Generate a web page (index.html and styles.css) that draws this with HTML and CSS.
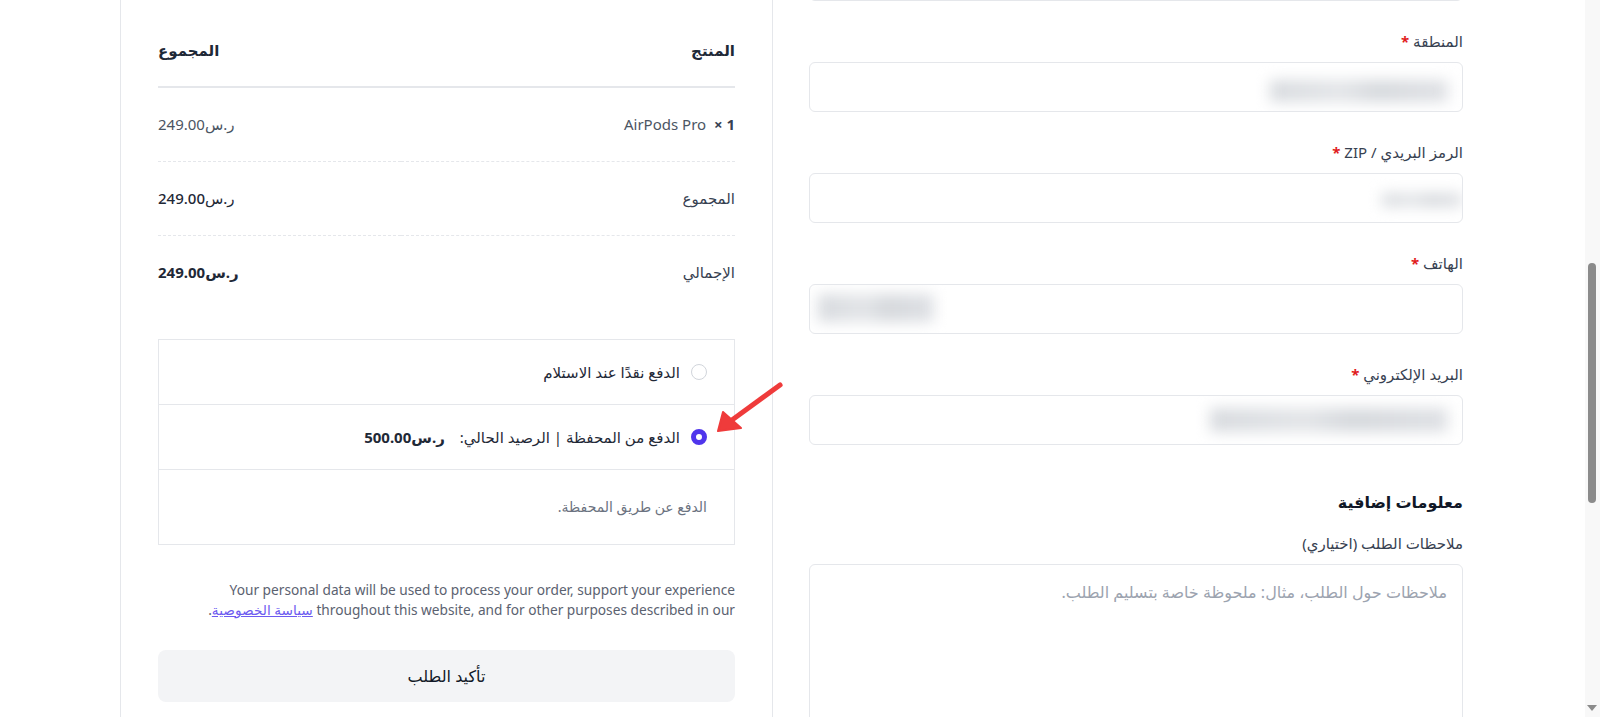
FILE: index.html
```html
<!DOCTYPE html>
<html lang="ar" dir="rtl">
<head>
  <meta charset="UTF-8" />
  <meta name="viewport" content="width=device-width, initial-scale=1.0"/>
  <title>إتمام الطلب</title>
  <link rel="stylesheet" href="styles.css">
</head>
<body>
  <main class="checkout">
    <section class="billing">
      <!-- bottom of the city field, scrolled out of view -->
      <div class="field field-prev">
        <div class="input"></div>
      </div>
      <div class="field">
        <label>المنطقة <span class="req">*</span></label>
        <div class="input"><span class="blur blur-region"></span></div>
      </div>
      <div class="field">
        <label>الرمز البريدي / ZIP <span class="req">*</span></label>
        <div class="input"><span class="blur blur-zip"></span></div>
      </div>
      <div class="field">
        <label>الهاتف <span class="req">*</span></label>
        <div class="input input-ltr"><span class="blur blur-phone"></span></div>
      </div>
      <div class="field">
        <label>البريد الإلكتروني <span class="req">*</span></label>
        <div class="input"><span class="blur blur-email"></span></div>
      </div>

      <h3 class="extra-title">معلومات إضافية</h3>
      <div class="field">
        <label>ملاحظات الطلب (اختياري)</label>
        <textarea placeholder="ملاحظات حول الطلب، مثال: ملحوظة خاصة بتسليم الطلب."></textarea>
      </div>
    </section>

    <section class="review">
      <table class="order-table">
        <thead>
          <tr>
            <th>المنتج</th>
            <th class="col-total">المجموع</th>
          </tr>
        </thead>
        <tbody>
          <tr>
            <td class="product-name">AirPods Pro&nbsp; <strong>×&nbsp;1</strong></td>
            <td class="col-total">ر.س249.00</td>
          </tr>
          <tr class="subtotal">
            <td>المجموع</td>
            <td class="col-total">ر.س249.00</td>
          </tr>
          <tr class="grand-total">
            <td>الإجمالي</td>
            <td class="col-total">ر.س249.00</td>
          </tr>
        </tbody>
      </table>

      <div class="payment">
        <label class="option">
          <span class="radio"></span>
          الدفع نقدًا عند الاستلام
        </label>
        <label class="option">
          <span class="radio checked"></span>
          الدفع من المحفظة | الرصيد الحالي:&nbsp; <strong>ر.س500.00</strong>
        </label>
        <div class="payment-desc">الدفع عن طريق المحفظة.</div>
      </div>

      <p class="privacy">Your personal data will be used to process your order, support your experience throughout this website, and for other purposes described in our <a href="#">سياسة الخصوصية</a>.</p>

      <button class="place-order">تأكيد الطلب</button>
    </section>
  </main>

  <!-- page is scrolled: draw the scrollbar by hand -->
  <div class="scrollbar">
    <span class="thumb"></span>
    <span class="down"></span>
  </div>

  <svg class="pointer" width="90" height="66" viewBox="0 0 90 66">
    <line x1="80" y1="10" x2="32" y2="45" stroke="#ef3b3b" stroke-width="5" stroke-linecap="round"/>
    <polygon points="18,56 23,37 41,53" fill="#ef3b3b" stroke="#ef3b3b" stroke-width="2" stroke-linejoin="round"/>
  </svg>
</body>
</html>
```

FILE: styles.css
```css
html, body {
  overflow: hidden;
}

body {
  margin: 0;
  background: #fff;
  font-family: "Noto Sans", "DejaVu Sans", sans-serif;
  font-size: 15px;
  color: #374151;
  height: 717px;
}

.checkout {
  display: grid;
  grid-template-columns: 727px 653px;
  margin: -100px 100px 0 0;
}

/* billing form */

.billing {
  padding: 20px 37px 0 36px;
}

.field {
  margin-bottom: 30px;
}

.field-prev {
  padding-top: 31px;
}

.field label {
  display: block;
  line-height: 20px;
  margin-bottom: 11px;
  color: #374151;
}

.req {
  color: #e11d1d;
  font-weight: 700;
}

.input {
  height: 48px;
  border: 1px solid #e5e7eb;
  border-radius: 6px;
  display: flex;
  align-items: center;
  padding: 0 14px;
  overflow: hidden;
}

.input-ltr {
  justify-content: flex-end;
  padding: 0 8px;
}

.blur {
  display: block;
  background: linear-gradient(to left, #dfe1e5, #d6d9dd 40%, #e3e5e8 60%, #d8dbdf);
  filter: blur(7px);
}

.blur-region { width: 178px; height: 22px; margin-top: 7px; }
.blur-zip { width: 80px; height: 14px; margin: 4px -14px 0 0; }
.blur-phone { width: 116px; height: 28px; margin-top: -3px; }
.blur-email { width: 238px; height: 24px; }

.extra-title {
  margin: 45px 0 19px;
  font-size: 16px;
  line-height: 24px;
  font-weight: 700;
  color: #111827;
}

textarea {
  display: block;
  width: 100%;
  height: 200px;
  box-sizing: border-box;
  border: 1px solid #e5e7eb;
  border-radius: 6px;
  padding: 15px 15px;
  font: inherit;
  font-size: 16px;
  line-height: 24px;
  resize: none;
}

textarea::placeholder {
  color: #9ca3af;
}

/* order review */

.review {
  padding: 114px 37px 0;
  border-left: 1px solid #e5e7eb;
  border-right: 1px solid #e5e7eb;
}

.order-table {
  width: 100%;
  border-collapse: collapse;
}

.order-table th {
  text-align: right;
  padding: 25px 0;
  line-height: 22px;
  font-weight: 600;
  color: #1f2937;
  border-bottom: 2px solid #e5e7eb;
}

.order-table td {
  padding: 26px 0;
  line-height: 21px;
  border-bottom: 1px dashed #e5e7eb;
}

.order-table tr:last-child td {
  border-bottom: none;
}

.order-table .col-total {
  text-align: left;
}

.product-name,
.product-name + .col-total {
  color: #4b5563;
}

.product-name strong {
  color: #374151;
}

.subtotal .col-total {
  font-weight: 500;
  color: #1f2937;
}

.grand-total .col-total {
  font-weight: 700;
  color: #1f2937;
}

.payment {
  margin-top: 30px;
  border: 1px solid #e5e7eb;
}

.option {
  display: flex;
  align-items: center;
  gap: 11px;
  padding: 21px 27px;
  line-height: 22px;
  border-bottom: 1px solid #e5e7eb;
  color: #1f2937;
}

.option strong {
  font-weight: 700;
}

.radio {
  width: 16px;
  height: 16px;
  box-sizing: border-box;
  border: 1px solid #d1d5db;
  border-radius: 50%;
}

.radio.checked {
  border: 5px solid #4f35ec;
}

.payment-desc {
  padding: 26px 27px;
  line-height: 22px;
  font-size: 14px;
  color: #6b7280;
}

.privacy {
  margin: 35px 0 0;
  font-size: 13.7px;
  line-height: 20px;
  color: #5b6270;
}

.privacy a {
  color: #6d5bf0;
}

.place-order {
  display: block;
  width: 100%;
  height: 52px;
  margin-top: 30px;
  border: none;
  border-radius: 8px;
  background: #f3f4f6;
  font: inherit;
  font-size: 16px;
  color: #111827;
  cursor: pointer;
}

/* fake browser scrollbar */

.scrollbar {
  position: fixed;
  top: 0;
  right: 0;
  width: 15px;
  height: 717px;
  background: #f8f8f8;
}

.thumb {
  position: absolute;
  top: 263px;
  right: 4px;
  width: 8px;
  height: 240px;
  border-radius: 4px;
  background: #8b8b8b;
}

.down {
  position: absolute;
  bottom: 6px;
  right: 3px;
  border-left: 5px solid transparent;
  border-right: 5px solid transparent;
  border-top: 6px solid #8b8b8b;
}

.pointer {
  position: absolute;
  left: 700px;
  top: 375px;
}
```
